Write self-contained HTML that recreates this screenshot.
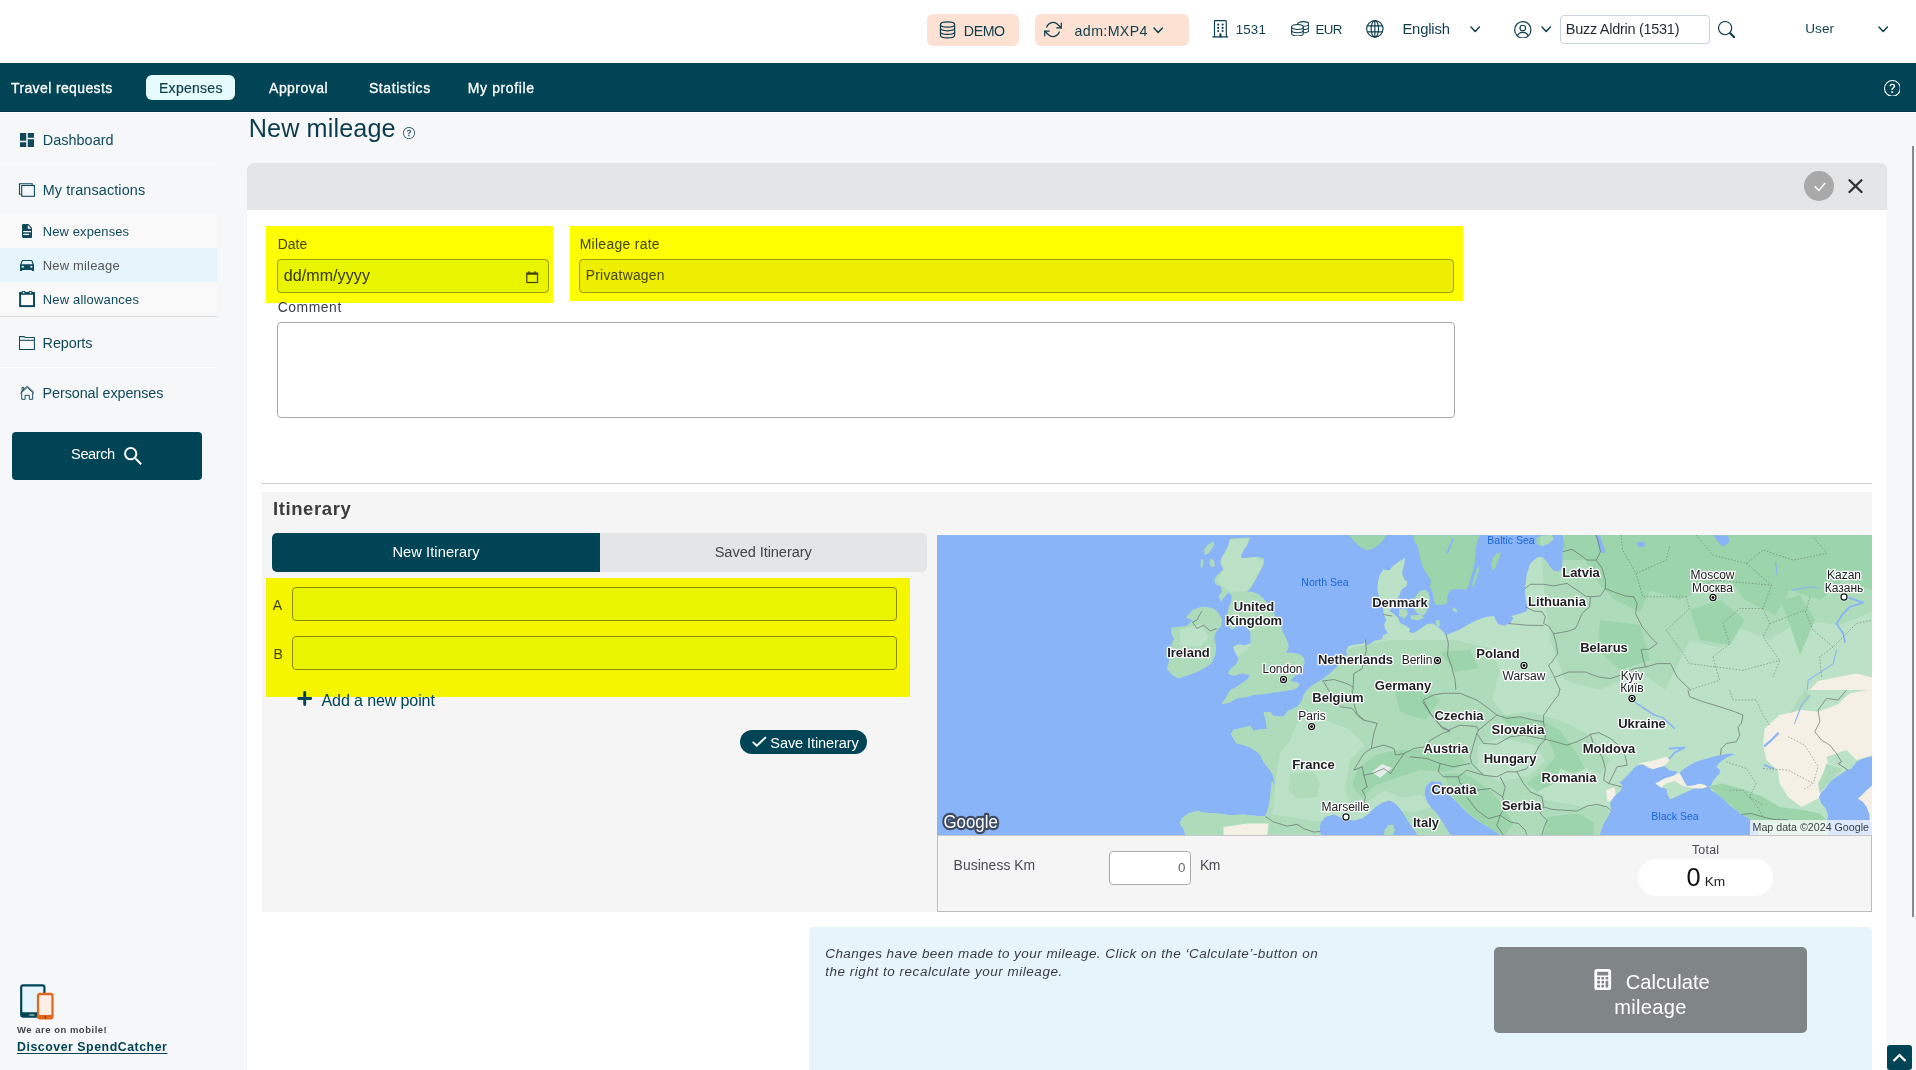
<!DOCTYPE html>
<html lang="en">
<head>
<meta charset="utf-8">
<title>New mileage</title>
<style>
*{box-sizing:border-box;margin:0;padding:0}
html,body{width:1916px;height:1070px;overflow:hidden}
body{position:relative;background:#f6f7f9;font-family:"Liberation Sans",sans-serif;color:#0b3c4c;font-size:15px}
.abs{position:absolute}
.t{position:absolute;white-space:nowrap;line-height:1}
svg{display:block;position:absolute}
#topbar{left:0;top:0;width:1916px;height:63px;background:#fff}
#navbar{left:0;top:63px;width:1916px;height:49px;background:#004455;border-bottom:1px solid #003748}
.pill{position:absolute;top:14px;height:32px;background:#fde1d3;border-radius:6px}
.tb{color:#0d3d4d;font-size:15px}
.nav{color:#fff;font-size:15px;top:80px;-webkit-text-stroke:0.25px #fff}
#sidebar{left:0;top:113px;width:217px;height:958px;background:#f6f7f9}
.sb{color:#0f4a5c;font-size:15.5px}
.sb2{color:#0f4a5c;font-size:13.5px}
.lbl{color:#3a4a50;font-size:15px}
.inp{position:absolute;border:1px solid #999;border-radius:4px;background:#fff}
.hl{position:absolute;background:#ffff00;mix-blend-mode:multiply}
</style>
</head>
<body>

<!-- ===== top bar ===== -->
<div id="topbar" class="abs"></div>
<div class="pill" style="left:927px;width:92px"></div>
<div class="pill" style="left:1035px;width:154px"></div>
<div class="abs" style="left:1560px;top:15px;width:150px;height:29px;border:1px solid #c9d3da;border-radius:4px;background:#fff"></div>

<!-- ===== nav bar ===== -->
<div id="navbar" class="abs"></div>
<div class="abs" style="left:0;top:112px;width:1916px;height:1px;background:#fff"></div>
<div class="abs" style="left:146px;top:75px;width:89px;height:25px;border-radius:6px;background:#e6fbfb"></div>

<!-- ===== sidebar ===== -->
<div id="sidebar" class="abs"></div>
<div class="abs" style="left:0;top:164px;width:217px;height:1px;background:#fff"></div>
<div class="abs" style="left:0;top:214px;width:217px;height:102px;background:#f9f9f9"></div>
<div class="abs" style="left:0;top:248px;width:217px;height:34px;background:#e6f5fb"></div>
<div class="abs" style="left:0;top:316px;width:217px;height:1px;background:#dcdcdc"></div>
<div class="abs" style="left:0;top:367px;width:217px;height:1px;background:#fff"></div>
<div class="abs" style="left:12px;top:432px;width:190px;height:48px;border-radius:4px;background:#004455"></div>

<!-- ===== main panel ===== -->
<div class="abs" style="left:247px;top:163px;width:1640px;height:907px;background:#fff;border-radius:7px 7px 0 0;box-shadow:0 0 2px rgba(0,0,0,0.05)"></div>
<div class="abs" style="left:247px;top:163px;width:1640px;height:47px;background:#e4e5e7;border-radius:7px 7px 0 0"></div>
<div class="abs" style="left:1804px;top:171px;width:30px;height:30px;border-radius:50%;background:#a9a9a9"></div>

<!-- form -->
<div class="inp" style="left:277px;top:259px;width:272px;height:34px;background:#e8f4fe"></div>
<div class="inp" style="left:579px;top:259px;width:875px;height:34px;background:#eeeeee"></div>
<div class="inp" style="left:277px;top:322px;width:1178px;height:96px;border-color:#aaa"></div>

<div class="abs" style="left:262px;top:483px;width:1610px;height:1px;background:#cfcfcf"></div>

<!-- itinerary -->
<div class="abs" style="left:262px;top:492px;width:1610px;height:420px;background:#f5f5f5"></div>
<div class="abs" style="left:272px;top:533px;width:328px;height:39px;background:#004455;border-radius:5px 0 0 5px"></div>
<div class="abs" style="left:600px;top:533px;width:327px;height:39px;background:#e4e5e7;border-radius:0 5px 5px 0"></div>
<div class="inp" style="left:292px;top:587px;width:605px;height:34px;background:#e8f4fe;border-color:#8a8a8a"></div>
<div class="inp" style="left:292px;top:636px;width:605px;height:34px;background:#e8f4fe;border-color:#8a8a8a"></div>
<div class="abs" style="left:740px;top:730px;width:127px;height:24px;border-radius:12px;background:#004455"></div>

<!-- map -->
<div id="map" class="abs" style="left:937px;top:535px;width:935px;height:300px;background:#8ab4f8;overflow:hidden">
<svg width="935" height="300" viewBox="0 0 935 300" style="left:0;top:0"><defs><clipPath id="landclip"><path d="M264.8 71.8 L255.6 74.8 L248.9 82.7 L255.6 85.2 L249.8 91.0 L241.4 91.9 L234.8 92.7 L233.9 98.5 L237.3 103.6 L233.9 110.2 L231.4 116.9 L232.2 125.3 L229.7 133.6 L234.8 139.5 L240.6 143.6 L249.8 141.1 L259.8 137.0 L268.2 132.8 L274.8 127.8 L278.2 120.3 L279.3 111.9 L277.3 103.6 L279.0 96.9 L284.0 91.0 L284.9 84.4 L281.5 77.7 L276.5 73.5 L270.7 72.2Z" fill="#000" /><path d="M313.3 2.5 L310.7 9.2 L306.6 15.0 L304.1 20.1 L304.1 23.4 L313.3 22.6 L321.6 22.1 L327.4 23.7 L326.6 29.2 L324.1 35.1 L319.9 41.8 L317.4 46.8 L314.1 52.6 L309.9 56.5 L315.8 57.1 L321.6 59.3 L326.6 63.5 L330.8 69.3 L335.0 75.2 L340.0 83.5 L344.1 91.0 L345.8 96.9 L349.2 103.6 L351.7 110.2 L350.8 114.4 L349.2 117.8 L356.7 117.8 L363.4 119.4 L367.0 122.8 L367.5 128.6 L365.0 134.5 L360.8 139.5 L355.8 142.8 L353.3 146.1 L360.0 147.3 L362.5 149.5 L360.0 152.8 L355.8 155.0 L353.3 155.3 L343.3 156.7 L335.0 157.8 L326.6 159.2 L316.6 160.0 L309.9 162.0 L299.9 163.4 L293.2 167.5 L284.5 169.2 L288.2 163.4 L293.2 155.0 L293.2 155.0 L298.2 152.8 L304.1 148.7 L309.9 144.5 L313.3 140.3 L304.9 138.6 L296.5 141.1 L290.7 138.6 L294.0 133.6 L299.9 128.6 L301.6 123.6 L298.2 117.8 L295.7 111.9 L301.6 109.4 L308.2 110.2 L313.3 108.6 L313.6 103.6 L313.3 96.9 L308.2 91.0 L299.9 89.4 L296.5 94.4 L293.2 93.5 L292.4 85.2 L290.7 78.5 L291.5 72.7 L294.0 66.8 L294.9 61.0 L291.5 57.6 L287.4 61.8 L284.0 66.8 L281.5 61.0 L284.9 56.8 L284.0 51.8 L278.2 49.3 L277.3 44.3 L281.5 38.4 L286.5 34.2 L283.2 28.4 L284.0 23.4 L288.2 16.7 L291.5 10.0 L293.2 3.7 L301.6 3.0Z" fill="#000" /><path d="M276.5 5.9 L277.3 10.0 L271.5 18.4 L267.3 20.1 L267.3 14.2 L271.5 9.2Z" fill="#000" /><path d="M273.2 23.4 L276.5 25.1 L278.2 30.9 L274.8 32.6 L272.3 28.4Z" fill="#000" /><path d="M264.0 24.2 L266.5 25.1 L265.7 32.6 L263.5 32.6Z" fill="#000" /><path d="M479.3 60.8 L482.3 56.3 L488.3 54.8 L491.5 57.8 L493.0 63.8 L491.5 69.8 L490.0 75.8 L486.8 80.6 L480.8 78.8 L476.3 72.8 L474.8 66.8Z" fill="#000" /><path d="M462.1 74.3 L468.8 73.5 L471.1 78.8 L467.3 83.5 L462.1 81.0Z" fill="#000" /><path d="M473.3 80.6 L483.8 79.7 L487.1 82.6 L480.8 85.6 L474.0 84.1Z" fill="#000" /><path d="M498.7 84.7 L502.5 85.5 L502.9 90.7 L499.5 91.5Z" fill="#000" /><path d="M515.9 72.0 L520.4 75.0 L518.9 77.6 L515.2 75.0Z" fill="#000" /><path d="M451.0 290.3 L456.0 289.4 L457.9 295.3 L455.5 300.6 L446.9 300.6 L447.7 295.3Z" fill="#000" /><path d="M412.0 0.2 L416.5 5.5 L422.4 11.5 L429.9 15.2 L437.4 12.9 L444.1 7.7 L447.9 2.5 L449.4 0.2Z" fill="#000" /><path d="M476.3 0.2 L477.8 7.0 L480.8 11.5 L482.3 18.9 L483.8 26.4 L486.8 33.9 L490.5 39.9 L494.2 45.9 L492.7 51.1 L495.7 57.8 L496.5 65.3 L498.7 69.8 L506.2 69.8 L510.7 68.3 L509.9 62.3 L513.7 54.8 L521.2 54.1 L529.4 54.8 L531.6 50.3 L533.1 44.4 L536.1 35.4 L537.6 27.9 L538.4 18.9 L539.1 11.5 L540.6 5.5 L542.8 0.2Z" fill="#000" /><path d="M541.3 30.9 L542.4 34.2 L537.2 50.6 L534.6 52.1 L537.6 39.9Z" fill="#000" /><path d="M563.8 17.4 L561.5 24.9 L558.5 32.4 L555.6 35.7 L554.1 29.4 L555.6 23.4 L559.3 18.2Z" fill="#000" /><path d="M599.1 3.4 L604.9 0.8 L615.0 0.0 L616.6 4.2 L611.6 8.4 L604.9 10.9 L599.9 9.2Z" fill="#000" /><path d="M935.0 0.0 L935.0 300.0 L821.8 300.3 L819.3 288.6 L814.3 284.9 L809.3 281.9 L804.3 279.4 L799.3 275.3 L792.6 270.2 L785.9 263.6 L779.3 258.5 L774.2 255.2 L772.6 252.2 L770.9 251.5 L765.9 253.5 L757.5 253.5 L749.2 256.9 L740.8 261.1 L733.3 264.4 L730.8 260.2 L729.1 253.5 L724.1 252.7 L718.3 248.5 L727.5 243.5 L737.5 240.2 L740.8 236.8 L732.5 235.2 L727.5 231.0 L720.8 232.7 L715.8 234.3 L710.8 232.7 L705.8 229.3 L699.1 231.0 L696.6 233.5 L692.4 238.5 L687.4 243.5 L682.4 247.7 L685.7 250.2 L684.1 255.2 L676.5 261.9 L673.2 268.6 L674.0 275.3 L670.7 281.9 L666.5 288.6 L662.3 300.3 L564.0 300.3 L556.5 295.3 L548.2 290.3 L539.8 285.3 L531.5 278.6 L524.8 271.9 L518.1 265.2 L511.4 258.5 L506.4 251.0 L503.9 246.5 L498.1 246.5 L494.4 246.0 L491.4 248.5 L488.4 252.2 L487.4 258.5 L489.7 266.9 L494.7 273.6 L499.7 278.6 L506.4 288.6 L513.4 300.3 L480.6 300.3 L475.3 292.0 L471.1 286.1 L467.7 280.3 L462.7 272.7 L456.9 267.2 L452.7 265.2 L446.9 266.9 L438.5 271.9 L431.8 278.6 L425.2 283.6 L416.8 285.6 L408.4 284.6 L396.8 279.6 L388.4 281.9 L383.7 286.9 L382.6 293.6 L383.7 300.3 L248.4 300.3 L246.4 293.6 L242.8 288.6 L244.8 283.6 L251.5 278.6 L259.8 276.1 L268.2 277.8 L279.8 278.6 L293.2 280.3 L306.6 279.4 L319.9 281.1 L328.3 281.6 L331.6 271.9 L333.3 261.9 L334.1 251.9 L335.0 246.0 L338.6 250.5 L335.3 238.5 L331.6 233.5 L326.6 226.8 L323.3 220.1 L319.9 216.8 L313.3 212.6 L306.6 210.1 L299.9 208.4 L296.5 203.4 L294.0 198.4 L296.5 195.1 L306.6 192.6 L313.3 190.9 L316.6 195.9 L323.3 194.2 L330.0 194.2 L329.1 186.7 L327.4 180.1 L326.6 176.7 L333.3 177.5 L336.6 180.9 L346.7 181.7 L350.8 175.9 L360.0 171.7 L365.0 165.9 L366.7 160.0 L370.0 155.0 L370.0 155.0 L376.7 149.5 L385.1 144.5 L391.7 139.5 L398.4 133.6 L405.1 126.9 L410.1 119.4 L409.3 115.3 L411.8 111.1 L418.5 109.4 L426.8 108.6 L428.5 104.4 L428.4 108.7 L430.7 110.5 L437.4 105.7 L444.9 104.2 L446.4 99.7 L450.9 98.2 L447.9 93.7 L447.1 89.2 L449.4 84.7 L447.1 80.3 L446.4 76.5 L445.6 69.8 L442.2 62.3 L440.4 54.8 L441.1 45.9 L442.6 39.9 L446.4 34.6 L452.4 35.4 L455.3 31.6 L462.1 26.4 L468.1 22.7 L467.3 28.7 L465.8 33.9 L465.1 38.4 L467.3 44.4 L470.3 46.6 L469.6 51.1 L464.3 54.8 L462.8 59.3 L459.8 65.3 L455.3 71.3 L452.4 75.8 L456.8 78.8 L461.3 83.2 L462.8 87.7 L468.8 90.7 L473.3 93.7 L471.8 96.7 L476.3 98.2 L482.3 94.5 L489.7 89.2 L495.7 88.5 L501.7 92.2 L506.2 96.7 L509.2 99.7 L513.7 98.2 L522.7 94.5 L531.6 89.2 L540.6 84.7 L549.6 81.7 L557.1 81.0 L558.5 84.7 L561.5 89.2 L567.5 90.7 L573.5 87.7 L576.5 83.2 L574.3 81.0 L582.5 78.8 L589.2 76.5 L590.7 72.8 L588.5 63.8 L587.7 54.8 L588.2 61.8 L588.2 50.1 L589.9 38.4 L593.3 28.4 L599.9 22.6 L604.9 21.7 L609.1 25.9 L612.5 30.9 L616.6 35.9 L621.6 36.8 L625.0 33.4 L625.8 25.1 L625.8 16.7 L627.5 10.0 L626.7 3.4 L625.8 0.0Z" fill="#000" /></clipPath></defs>
<path d="M264.8 71.8 L255.6 74.8 L248.9 82.7 L255.6 85.2 L249.8 91.0 L241.4 91.9 L234.8 92.7 L233.9 98.5 L237.3 103.6 L233.9 110.2 L231.4 116.9 L232.2 125.3 L229.7 133.6 L234.8 139.5 L240.6 143.6 L249.8 141.1 L259.8 137.0 L268.2 132.8 L274.8 127.8 L278.2 120.3 L279.3 111.9 L277.3 103.6 L279.0 96.9 L284.0 91.0 L284.9 84.4 L281.5 77.7 L276.5 73.5 L270.7 72.2Z" fill="#aedcba" />
<path d="M313.3 2.5 L310.7 9.2 L306.6 15.0 L304.1 20.1 L304.1 23.4 L313.3 22.6 L321.6 22.1 L327.4 23.7 L326.6 29.2 L324.1 35.1 L319.9 41.8 L317.4 46.8 L314.1 52.6 L309.9 56.5 L315.8 57.1 L321.6 59.3 L326.6 63.5 L330.8 69.3 L335.0 75.2 L340.0 83.5 L344.1 91.0 L345.8 96.9 L349.2 103.6 L351.7 110.2 L350.8 114.4 L349.2 117.8 L356.7 117.8 L363.4 119.4 L367.0 122.8 L367.5 128.6 L365.0 134.5 L360.8 139.5 L355.8 142.8 L353.3 146.1 L360.0 147.3 L362.5 149.5 L360.0 152.8 L355.8 155.0 L353.3 155.3 L343.3 156.7 L335.0 157.8 L326.6 159.2 L316.6 160.0 L309.9 162.0 L299.9 163.4 L293.2 167.5 L284.5 169.2 L288.2 163.4 L293.2 155.0 L293.2 155.0 L298.2 152.8 L304.1 148.7 L309.9 144.5 L313.3 140.3 L304.9 138.6 L296.5 141.1 L290.7 138.6 L294.0 133.6 L299.9 128.6 L301.6 123.6 L298.2 117.8 L295.7 111.9 L301.6 109.4 L308.2 110.2 L313.3 108.6 L313.6 103.6 L313.3 96.9 L308.2 91.0 L299.9 89.4 L296.5 94.4 L293.2 93.5 L292.4 85.2 L290.7 78.5 L291.5 72.7 L294.0 66.8 L294.9 61.0 L291.5 57.6 L287.4 61.8 L284.0 66.8 L281.5 61.0 L284.9 56.8 L284.0 51.8 L278.2 49.3 L277.3 44.3 L281.5 38.4 L286.5 34.2 L283.2 28.4 L284.0 23.4 L288.2 16.7 L291.5 10.0 L293.2 3.7 L301.6 3.0Z" fill="#aedcba" />
<path d="M276.5 5.9 L277.3 10.0 L271.5 18.4 L267.3 20.1 L267.3 14.2 L271.5 9.2Z" fill="#aedcba" />
<path d="M273.2 23.4 L276.5 25.1 L278.2 30.9 L274.8 32.6 L272.3 28.4Z" fill="#aedcba" />
<path d="M264.0 24.2 L266.5 25.1 L265.7 32.6 L263.5 32.6Z" fill="#aedcba" />
<path d="M479.3 60.8 L482.3 56.3 L488.3 54.8 L491.5 57.8 L493.0 63.8 L491.5 69.8 L490.0 75.8 L486.8 80.6 L480.8 78.8 L476.3 72.8 L474.8 66.8Z" fill="#aedcba" />
<path d="M462.1 74.3 L468.8 73.5 L471.1 78.8 L467.3 83.5 L462.1 81.0Z" fill="#aedcba" />
<path d="M473.3 80.6 L483.8 79.7 L487.1 82.6 L480.8 85.6 L474.0 84.1Z" fill="#aedcba" />
<path d="M498.7 84.7 L502.5 85.5 L502.9 90.7 L499.5 91.5Z" fill="#aedcba" />
<path d="M515.9 72.0 L520.4 75.0 L518.9 77.6 L515.2 75.0Z" fill="#aedcba" />
<path d="M451.0 290.3 L456.0 289.4 L457.9 295.3 L455.5 300.6 L446.9 300.6 L447.7 295.3Z" fill="#aedcba" />
<path d="M412.0 0.2 L416.5 5.5 L422.4 11.5 L429.9 15.2 L437.4 12.9 L444.1 7.7 L447.9 2.5 L449.4 0.2Z" fill="#9cd5ab" />
<path d="M476.3 0.2 L477.8 7.0 L480.8 11.5 L482.3 18.9 L483.8 26.4 L486.8 33.9 L490.5 39.9 L494.2 45.9 L492.7 51.1 L495.7 57.8 L496.5 65.3 L498.7 69.8 L506.2 69.8 L510.7 68.3 L509.9 62.3 L513.7 54.8 L521.2 54.1 L529.4 54.8 L531.6 50.3 L533.1 44.4 L536.1 35.4 L537.6 27.9 L538.4 18.9 L539.1 11.5 L540.6 5.5 L542.8 0.2Z" fill="#9cd5ab" />
<path d="M541.3 30.9 L542.4 34.2 L537.2 50.6 L534.6 52.1 L537.6 39.9Z" fill="#9cd5ab" />
<path d="M563.8 17.4 L561.5 24.9 L558.5 32.4 L555.6 35.7 L554.1 29.4 L555.6 23.4 L559.3 18.2Z" fill="#9cd5ab" />
<path d="M599.1 3.4 L604.9 0.8 L615.0 0.0 L616.6 4.2 L611.6 8.4 L604.9 10.9 L599.9 9.2Z" fill="#9cd5ab" />
<path d="M935.0 0.0 L935.0 300.0 L821.8 300.3 L819.3 288.6 L814.3 284.9 L809.3 281.9 L804.3 279.4 L799.3 275.3 L792.6 270.2 L785.9 263.6 L779.3 258.5 L774.2 255.2 L772.6 252.2 L770.9 251.5 L765.9 253.5 L757.5 253.5 L749.2 256.9 L740.8 261.1 L733.3 264.4 L730.8 260.2 L729.1 253.5 L724.1 252.7 L718.3 248.5 L727.5 243.5 L737.5 240.2 L740.8 236.8 L732.5 235.2 L727.5 231.0 L720.8 232.7 L715.8 234.3 L710.8 232.7 L705.8 229.3 L699.1 231.0 L696.6 233.5 L692.4 238.5 L687.4 243.5 L682.4 247.7 L685.7 250.2 L684.1 255.2 L676.5 261.9 L673.2 268.6 L674.0 275.3 L670.7 281.9 L666.5 288.6 L662.3 300.3 L564.0 300.3 L556.5 295.3 L548.2 290.3 L539.8 285.3 L531.5 278.6 L524.8 271.9 L518.1 265.2 L511.4 258.5 L506.4 251.0 L503.9 246.5 L498.1 246.5 L494.4 246.0 L491.4 248.5 L488.4 252.2 L487.4 258.5 L489.7 266.9 L494.7 273.6 L499.7 278.6 L506.4 288.6 L513.4 300.3 L480.6 300.3 L475.3 292.0 L471.1 286.1 L467.7 280.3 L462.7 272.7 L456.9 267.2 L452.7 265.2 L446.9 266.9 L438.5 271.9 L431.8 278.6 L425.2 283.6 L416.8 285.6 L408.4 284.6 L396.8 279.6 L388.4 281.9 L383.7 286.9 L382.6 293.6 L383.7 300.3 L248.4 300.3 L246.4 293.6 L242.8 288.6 L244.8 283.6 L251.5 278.6 L259.8 276.1 L268.2 277.8 L279.8 278.6 L293.2 280.3 L306.6 279.4 L319.9 281.1 L328.3 281.6 L331.6 271.9 L333.3 261.9 L334.1 251.9 L335.0 246.0 L338.6 250.5 L335.3 238.5 L331.6 233.5 L326.6 226.8 L323.3 220.1 L319.9 216.8 L313.3 212.6 L306.6 210.1 L299.9 208.4 L296.5 203.4 L294.0 198.4 L296.5 195.1 L306.6 192.6 L313.3 190.9 L316.6 195.9 L323.3 194.2 L330.0 194.2 L329.1 186.7 L327.4 180.1 L326.6 176.7 L333.3 177.5 L336.6 180.9 L346.7 181.7 L350.8 175.9 L360.0 171.7 L365.0 165.9 L366.7 160.0 L370.0 155.0 L370.0 155.0 L376.7 149.5 L385.1 144.5 L391.7 139.5 L398.4 133.6 L405.1 126.9 L410.1 119.4 L409.3 115.3 L411.8 111.1 L418.5 109.4 L426.8 108.6 L428.5 104.4 L428.4 108.7 L430.7 110.5 L437.4 105.7 L444.9 104.2 L446.4 99.7 L450.9 98.2 L447.9 93.7 L447.1 89.2 L449.4 84.7 L447.1 80.3 L446.4 76.5 L445.6 69.8 L442.2 62.3 L440.4 54.8 L441.1 45.9 L442.6 39.9 L446.4 34.6 L452.4 35.4 L455.3 31.6 L462.1 26.4 L468.1 22.7 L467.3 28.7 L465.8 33.9 L465.1 38.4 L467.3 44.4 L470.3 46.6 L469.6 51.1 L464.3 54.8 L462.8 59.3 L459.8 65.3 L455.3 71.3 L452.4 75.8 L456.8 78.8 L461.3 83.2 L462.8 87.7 L468.8 90.7 L473.3 93.7 L471.8 96.7 L476.3 98.2 L482.3 94.5 L489.7 89.2 L495.7 88.5 L501.7 92.2 L506.2 96.7 L509.2 99.7 L513.7 98.2 L522.7 94.5 L531.6 89.2 L540.6 84.7 L549.6 81.7 L557.1 81.0 L558.5 84.7 L561.5 89.2 L567.5 90.7 L573.5 87.7 L576.5 83.2 L574.3 81.0 L582.5 78.8 L589.2 76.5 L590.7 72.8 L588.5 63.8 L587.7 54.8 L588.2 61.8 L588.2 50.1 L589.9 38.4 L593.3 28.4 L599.9 22.6 L604.9 21.7 L609.1 25.9 L612.5 30.9 L616.6 35.9 L621.6 36.8 L625.0 33.4 L625.8 25.1 L625.8 16.7 L627.5 10.0 L626.7 3.4 L625.8 0.0Z" fill="#bbe2c6" />
<g clip-path="url(#landclip)">
<path d="M291.5 5.0 L309.9 4.2 L319.9 23.4 L326.6 26.7 L318.3 45.1 L309.9 56.0 L293.2 57.1 L284.9 50.9 L279.8 45.1 L286.5 35.1 L284.0 25.1Z" fill="#bbe2c6" />
<path d="M299.9 95.2 L309.9 93.5 L313.3 111.9 L299.9 121.9 L296.5 111.9Z" fill="#bbe2c6" />
<path d="M243.1 95.2 L263.1 88.5 L271.5 101.9 L263.1 111.9 L243.1 110.2Z" fill="#bbe2c6" />
<path d="M291.5 190.9 L331.6 174.2 L353.3 171.7 L361.7 165.0 L373.4 155.0 L393.4 155.0 L385.1 175.0 L360.0 188.4 L353.3 205.1 L343.3 218.5 L340.0 233.5 L338.3 248.5 L336.6 271.9 L333.3 283.6 L324.9 283.6 L330.0 248.5 L319.9 218.5 L296.5 210.9Z" fill="#aedcba" />
<path d="M353.3 238.5 L376.7 236.8 L383.4 248.5 L380.1 261.9 L360.0 263.6 L351.7 255.2Z" fill="#aedcba" />
<path d="M353.0 170.0 L368.0 145.0 L393.0 120.0 L413.0 113.0 L453.0 105.0 L483.0 105.0 L518.0 105.0 L553.0 113.0 L563.0 135.0 L555.0 165.0 L568.0 180.0 L593.0 177.0 L623.0 185.0 L653.0 200.0 L673.0 225.0 L663.0 240.0 L633.0 225.0 L608.0 235.0 L593.0 255.0 L623.0 265.0 L653.0 265.0 L673.0 275.0 L663.0 305.0 L463.0 305.0 L468.0 265.0 L448.0 255.0 L433.0 265.0 L418.0 280.0 L408.0 255.0 L413.0 225.0 L428.0 210.0 L413.0 195.0 L393.0 187.0 L373.0 180.0Z" fill="#aedcba" />
<path d="M241.4 275.3 L330.0 278.6 L383.4 286.9 L385.1 302.0 L241.4 302.0Z" fill="#aedcba" />
<path d="M541.0 210.0 L563.0 203.0 L598.0 210.0 L608.0 225.0 L593.0 240.0 L563.0 247.0 L541.0 235.0Z" fill="#bbe2c6" />
<path d="M448.0 265.0 L483.0 260.0 L503.0 270.0 L478.0 277.0 L453.0 275.0Z" fill="#bbe2c6" />
<path d="M603.0 250.0 L663.0 243.0 L675.0 265.0 L653.0 273.0 L608.0 265.0Z" fill="#bbe2c6" />
<path d="M603.0 0.0 L935.0 0.0 L935.0 77.0 L903.0 90.0 L863.0 85.0 L833.0 105.0 L803.0 93.0 L783.0 113.0 L753.0 105.0 L728.0 155.0 L703.0 137.0 L663.0 155.0 L628.0 145.0 L613.0 105.0 L608.0 65.0Z" fill="#aedcba" />
<path d="M623.0 0.0 L935.0 0.0 L935.0 55.0 L908.0 45.0 L883.0 65.0 L853.0 55.0 L838.0 80.0 L808.0 65.0 L793.0 45.0 L763.0 50.0 L743.0 65.0 L713.0 55.0 L703.0 77.0 L678.0 65.0 L663.0 50.0 L648.0 25.0 L625.0 25.0Z" fill="#9cd5ab" />
<path d="M663.0 85.0 L703.0 90.0 L713.0 125.0 L683.0 135.0 L661.0 115.0Z" fill="#9cd5ab" />
<path d="M753.0 75.0 L783.0 65.0 L808.0 85.0 L793.0 110.0 L763.0 105.0Z" fill="#9cd5ab" />
<path d="M843.0 65.0 L863.0 60.0 L878.0 85.0 L863.0 120.0 L853.0 90.0Z" fill="#9cd5ab" />
<path d="M458.0 155.0 L483.0 150.0 L503.0 165.0 L488.0 185.0 L463.0 177.0Z" fill="#9cd5ab" />
<path d="M503.0 117.0 L533.0 115.0 L541.0 133.0 L518.0 137.0Z" fill="#9cd5ab" />
<path d="M421.0 233.0 L441.0 219.0 L463.0 215.0 L499.0 215.0 L523.0 219.0 L529.0 229.0 L509.0 237.0 L483.0 235.0 L459.0 243.0 L437.0 251.0 L425.0 263.0 L415.0 251.0Z" fill="#9cd5ab" />
<path d="M435.0 237.0 L445.0 229.0 L455.0 233.0 L443.0 243.0Z" fill="#e3ece6" />
<path d="M563.2 180.1 L583.2 181.7 L606.6 186.7 L623.3 195.1 L633.3 208.4 L641.7 221.8 L648.4 233.5 L636.7 238.5 L623.3 233.5 L616.6 248.5 L599.9 256.9 L589.9 248.5 L606.6 235.2 L618.3 221.8 L611.6 205.1 L596.6 195.1 L573.2 191.7Z" fill="#9cd5ab" />
<path d="M506.4 238.5 L528.1 238.5 L553.2 255.2 L566.5 271.9 L576.5 288.6 L566.5 302.0 L553.2 293.6 L539.8 285.3 L518.1 265.2Z" fill="#9cd5ab" />
<path d="M610.0 281.9 L640.0 278.6 L656.7 286.9 L656.7 302.0 L606.6 302.0Z" fill="#9cd5ab" />
<path d="M566.5 248.5 L589.9 248.5 L599.9 263.6 L589.9 278.6 L569.9 275.3 L566.5 261.9Z" fill="#aedcba" />
<path d="M771.7 251.0 L785.9 248.5 L809.3 255.2 L826.0 261.9 L842.7 271.9 L867.8 275.3 L882.8 278.6 L891.2 286.9 L876.1 288.6 L819.3 288.6 L809.3 282.3 L799.3 275.6 L785.9 263.9Z" fill="#9cd5ab" />
<path d="M936.2 154.2 L912.9 158.3 L899.5 170.0 L881.1 176.7 L864.4 175.0 L842.7 180.1 L827.7 193.4 L826.0 210.1 L829.4 225.1 L841.0 235.2 L842.7 248.5 L851.1 261.9 L864.4 271.9 L881.1 263.6 L889.5 250.2 L899.5 240.2 L906.2 233.5 L891.2 228.5 L889.5 221.8 L909.5 215.1 L919.5 225.1 L936.2 220.1Z" fill="#f5f0e5" />
<path d="M872.8 155.0 L881.1 146.1 L901.2 142.0 L919.5 138.6 L936.2 142.8 L936.2 155.0Z" fill="#f5f0e5" />
<path d="M889.5 228.5 L906.2 233.5 L899.5 240.2 L889.5 250.2 L882.8 258.5 L881.1 248.5 L886.1 238.5Z" fill="#aedcba" />
<path d="M852.7 178.4 L866.1 171.7 L874.4 161.7 L867.8 154.2 L861.1 165.0Z" fill="#aedcba" />
<path d="M718.3 248.5 L727.5 243.5 L737.5 240.2 L742.5 237.7 L750.0 251.0 L762.5 248.5 L771.2 251.5 L765.9 253.5 L757.5 253.5 L745.8 251.0 L737.5 246.0 L729.1 248.5 L724.1 252.7Z" fill="#f5f0e5" />
<path d="M700.8 228.5 L714.1 226.0 L729.1 221.8 L732.5 225.1 L727.5 231.0 L715.8 234.3 L705.8 229.3Z" fill="#f5f0e5" />
<path d="M669.0 255.2 L677.4 251.9 L679.0 261.9 L670.7 266.9Z" fill="#f5f0e5" />
<path d="M286.5 292.0 L309.9 288.6 L331.6 288.6 L330.0 302.0 L286.5 302.0Z" fill="#f5f0e5" />
</g>
<path d="M515.5 3.2 L517.0 4.3 L511.0 18.2 L508.9 18.2 L512.9 9.2Z" fill="#8ab4f8" />
<path d="M742.5 237.7 L747.5 233.5 L752.5 230.2 L759.2 226.8 L767.6 224.3 L775.9 221.8 L784.3 220.1 L792.6 218.5 L798.0 219.3 L790.9 221.8 L785.9 225.1 L781.8 228.5 L779.3 231.8 L783.4 235.2 L782.6 238.5 L779.3 241.8 L775.9 246.0 L774.2 250.2 L771.2 251.9 L767.6 249.4 L762.5 248.5 L757.5 250.2 L750.0 251.0 L747.5 246.9 L745.0 241.8Z" fill="#8ab4f8" />
<path d="M936.2 221.0 L926.2 223.5 L919.5 226.8 L914.5 233.5 L909.5 235.2 L904.5 238.5 L899.5 241.8 L892.8 246.9 L889.5 251.9 L884.5 256.9 L882.0 261.9 L884.5 268.6 L888.6 273.6 L891.2 280.3 L889.5 286.9 L892.0 302.0 L936.2 302.0Z" fill="#8ab4f8" />
<path d="M936.2 249.4 L929.6 255.2 L924.6 260.2 L920.9 263.6 L926.2 267.2 L929.6 271.9 L932.1 278.6 L933.2 286.9 L936.2 286.9Z" fill="#f5f0e5" />
<path d="M775.9 0.0 L790.9 0.8 L792.6 6.7 L785.9 11.7 L780.9 6.7Z" fill="#8ab4f8" />
<path d="M699.1 7.5 L707.4 6.7 L708.3 10.9 L701.6 12.5Z" fill="#8ab4f8" />
<path d="M659.0 0.0 L663.2 0.8 L667.4 15.0 L664.0 17.5 L660.7 8.4Z" fill="#8ab4f8" />
<path d="M662.6 11.7 L667.6 12.5 L667.6 18.4 L663.4 17.5Z" fill="#8ab4f8" />
<path d="M909.5 61.8 L926.2 67.7 L912.9 71.8 L906.2 78.5 L899.5 88.5 L906.2 98.5 L907.9 106.9" fill="none" stroke="#8ab4f8" stroke-width="1.8" stroke-linejoin="round" stroke-linecap="round"/>
<path d="M899.5 115.3 L896.2 128.6 L881.1 138.6 L871.1 145.3 L870.3 155.0" fill="none" stroke="#8ab4f8" stroke-width="1.1" stroke-linejoin="round" stroke-linecap="round"/>
<path d="M854.4 55.1 L874.4 51.8 L882.8 53.5" fill="none" stroke="#8ab4f8" stroke-width="1.1" stroke-linejoin="round" stroke-linecap="round"/>
<path d="M838.5 26.7 L840.2 40.1" fill="none" stroke="#8ab4f8" stroke-width="1.1" stroke-linejoin="round" stroke-linecap="round"/>
<path d="M694.9 165.0 L705.8 172.5 L717.5 180.1 L725.8 182.6 L737.5 193.4" fill="none" stroke="#8ab4f8" stroke-width="1.5" stroke-linejoin="round" stroke-linecap="round"/>
<path d="M732.5 213.5 L747.5 212.6 L737.5 217.6 L732.5 223.5" fill="none" stroke="#8ab4f8" stroke-width="1.8" stroke-linejoin="round" stroke-linecap="round"/>
<path d="M872.8 160.0 L864.4 170.0 L857.7 188.4" fill="none" stroke="#8ab4f8" stroke-width="1.1" stroke-linejoin="round" stroke-linecap="round"/>
<path d="M841.0 198.4 L834.4 205.1 L827.7 210.9" fill="none" stroke="#8ab4f8" stroke-width="2.2" stroke-linejoin="round" stroke-linecap="round"/>
<path d="M827.7 230.2 L836.0 233.5" fill="none" stroke="#8ab4f8" stroke-width="1.8" stroke-linejoin="round" stroke-linecap="round"/>
<path d="M625.8 16.7 L635.0 14.2 L643.4 20.1 L650.0 25.1 L659.2 25.1 L663.4 16.7 L660.9 5.0 L658.4 0.0" fill="none" stroke="#5f6368" stroke-width="0.75" stroke-opacity="0.85" stroke-linejoin="round"/>
<path d="M659.2 25.1 L665.1 33.4 L668.4 45.1 L668.4 53.5" fill="none" stroke="#5f6368" stroke-width="0.75" stroke-opacity="0.85" stroke-linejoin="round"/>
<path d="M588.2 53.5 L593.3 49.3 L606.6 49.3 L616.6 50.9 L630.0 48.4 L640.0 55.1 L648.4 61.0 L653.4 61.8 L663.4 61.0 L668.4 53.5" fill="none" stroke="#5f6368" stroke-width="0.75" stroke-opacity="0.85" stroke-linejoin="round"/>
<path d="M653.4 61.8 L652.5 71.8 L645.0 78.5 L640.8 88.5 L638.3 93.5 L631.7 96.0 L623.3 97.7 L616.6 98.5" fill="none" stroke="#5f6368" stroke-width="0.75" stroke-opacity="0.85" stroke-linejoin="round"/>
<path d="M588.2 71.8 L596.6 76.0 L604.9 76.8 L608.3 81.8 L606.6 88.5 L611.6 91.0 L616.6 98.5" fill="none" stroke="#5f6368" stroke-width="0.75" stroke-opacity="0.85" stroke-linejoin="round"/>
<path d="M571.5 88.5 L589.9 90.2 L606.6 90.5" fill="none" stroke="#5f6368" stroke-width="0.75" stroke-opacity="0.85" stroke-linejoin="round"/>
<path d="M616.6 98.5 L619.1 108.6 L620.8 118.6 L615.0 126.9 L611.6 130.3 L616.6 140.3 L620.0 148.7 L623.3 155.0" fill="none" stroke="#5f6368" stroke-width="0.75" stroke-opacity="0.85" stroke-linejoin="round"/>
<path d="M668.4 53.5 L678.4 57.6 L688.4 61.0 L696.8 61.8 L700.1 68.5 L698.5 78.5 L705.2 91.9 L713.5 101.9 L720.2 108.6 L711.8 114.4 L704.3 114.4 L706.0 123.6 L708.5 132.0" fill="none" stroke="#5f6368" stroke-width="0.75" stroke-opacity="0.85" stroke-linejoin="round"/>
<path d="M618.3 142.0 L631.7 137.0 L648.4 137.0 L661.7 142.0 L673.4 143.6 L683.4 140.3 L696.8 133.6 L708.5 132.0" fill="none" stroke="#5f6368" stroke-width="0.75" stroke-opacity="0.85" stroke-linejoin="round"/>
<path d="M708.5 132.0 L720.2 128.6 L733.5 128.6 L740.2 142.0 L746.9 148.7 L753.6 155.0" fill="none" stroke="#5f6368" stroke-width="0.75" stroke-opacity="0.85" stroke-linejoin="round"/>
<path d="M508.9 98.5 L511.4 108.6 L510.6 120.3 L514.8 132.0 L518.1 145.3 L518.9 155.0" fill="none" stroke="#5f6368" stroke-width="0.75" stroke-opacity="0.85" stroke-linejoin="round"/>
<path d="M750.9 155.0 L752.5 161.7 L765.9 166.7 L782.6 171.7 L797.6 176.7 L806.0 180.1 L804.3 188.4 L801.0 191.7 L802.6 200.1 L799.3 206.8 L789.3 208.4 L784.3 213.5 L783.4 220.1" fill="none" stroke="#5f6368" stroke-width="0.75" stroke-opacity="0.85" stroke-linejoin="round"/>
<path d="M909.5 155.0 L901.2 165.0 L889.5 163.4 L881.1 175.0 L882.8 186.7 L877.8 196.8 L884.5 205.1 L892.8 210.1 L899.5 218.5 L904.5 226.8 L901.2 228.5 L911.2 235.2" fill="none" stroke="#5f6368" stroke-width="0.75" stroke-opacity="0.85" stroke-linejoin="round"/>
<path d="M804.3 279.4 L814.3 278.6 L826.0 281.9 L836.0 284.4 L851.1 284.9" fill="none" stroke="#5f6368" stroke-width="0.75" stroke-opacity="0.85" stroke-linejoin="round"/>
<path d="M486.4 165.0 L493.0 178.4 L504.7 191.7 L511.4 195.1" fill="none" stroke="#5f6368" stroke-width="0.75" stroke-opacity="0.85" stroke-linejoin="round"/>
<path d="M486.4 165.0 L496.4 160.0 L506.4 158.3 L523.1 158.3 L539.8 165.0 L551.5 173.4 L559.8 180.1" fill="none" stroke="#5f6368" stroke-width="0.75" stroke-opacity="0.85" stroke-linejoin="round"/>
<path d="M511.4 195.1 L523.1 190.1 L539.8 191.7 L541.5 195.1 L549.8 188.4 L559.8 180.1" fill="none" stroke="#5f6368" stroke-width="0.75" stroke-opacity="0.85" stroke-linejoin="round"/>
<path d="M559.8 180.1 L569.9 183.4 L583.2 181.7 L596.6 185.1 L606.6 186.7 L606.6 180.1 L615.0 168.4 L621.6 160.0 L622.5 155.0" fill="none" stroke="#5f6368" stroke-width="0.75" stroke-opacity="0.85" stroke-linejoin="round"/>
<path d="M541.5 195.1 L539.8 198.4 L546.5 208.4 L559.8 209.3 L573.2 201.8 L586.6 200.1 L603.3 203.4 L608.3 204.3 L606.6 186.7" fill="none" stroke="#5f6368" stroke-width="0.75" stroke-opacity="0.85" stroke-linejoin="round"/>
<path d="M539.8 198.4 L536.5 210.1 L533.1 221.8 L534.8 228.5 L546.5 240.2 L559.8 241.8 L569.9 236.8 L579.9 236.8 L589.9 233.5 L596.6 221.8 L601.6 211.8 L608.3 204.3" fill="none" stroke="#5f6368" stroke-width="0.75" stroke-opacity="0.85" stroke-linejoin="round"/>
<path d="M608.3 204.3 L618.3 206.8 L630.0 210.1 L640.0 206.8 L650.0 201.8 L653.4 199.3 L661.7 197.6 L673.4 203.4 L683.4 211.8 L688.4 221.8 L690.1 230.2 L680.1 231.8 L676.8 238.5 L671.7 248.5 L678.4 250.2 L685.1 251.9" fill="none" stroke="#5f6368" stroke-width="0.75" stroke-opacity="0.85" stroke-linejoin="round"/>
<path d="M653.4 199.3 L656.7 210.1 L665.1 221.8 L668.4 233.5 L666.7 245.2 L671.7 248.5" fill="none" stroke="#5f6368" stroke-width="0.75" stroke-opacity="0.85" stroke-linejoin="round"/>
<path d="M606.6 271.9 L615.0 274.4 L640.0 276.1 L650.0 271.1 L660.1 269.4 L670.1 271.9 L673.4 275.3" fill="none" stroke="#5f6368" stroke-width="0.75" stroke-opacity="0.85" stroke-linejoin="round"/>
<path d="M579.9 236.8 L586.6 248.5 L593.3 256.9 L604.9 261.9 L606.6 271.9 L603.3 278.6 L610.0 285.3 L606.6 293.6 L604.9 300.3" fill="none" stroke="#5f6368" stroke-width="0.75" stroke-opacity="0.85" stroke-linejoin="round"/>
<path d="M563.2 241.8 L568.2 251.9 L565.7 261.9 L568.2 271.9 L563.2 280.3 L573.2 286.9 L581.6 288.6 L588.2 295.3 L589.9 300.3" fill="none" stroke="#5f6368" stroke-width="0.75" stroke-opacity="0.85" stroke-linejoin="round"/>
<path d="M473.0 221.8 L489.7 223.5 L503.1 228.5 L516.4 231.8 L533.1 228.5" fill="none" stroke="#5f6368" stroke-width="0.75" stroke-opacity="0.85" stroke-linejoin="round"/>
<path d="M503.1 228.5 L501.4 236.8 L506.4 241.8 L521.4 241.8 L529.8 235.2 L546.5 240.2" fill="none" stroke="#5f6368" stroke-width="0.75" stroke-opacity="0.85" stroke-linejoin="round"/>
<path d="M521.4 241.8 L523.1 248.5 L539.8 255.2 L553.2 253.5 L565.7 261.9" fill="none" stroke="#5f6368" stroke-width="0.75" stroke-opacity="0.85" stroke-linejoin="round"/>
<path d="M529.8 261.9 L539.8 275.3 L551.5 283.6 L563.2 280.3" fill="none" stroke="#5f6368" stroke-width="0.75" stroke-opacity="0.85" stroke-linejoin="round"/>
<path d="M563.2 280.3 L559.8 290.3 L566.5 300.3" fill="none" stroke="#5f6368" stroke-width="0.75" stroke-opacity="0.85" stroke-linejoin="round"/>
<path d="M386.7 146.6 L393.4 158.3 L403.4 171.7 L415.1 173.4 L421.8 181.7 L426.8 185.1 L440.2 188.4 L436.8 198.4 L434.3 213.5" fill="none" stroke="#5f6368" stroke-width="0.75" stroke-opacity="0.85" stroke-linejoin="round"/>
<path d="M434.3 213.5 L446.9 210.1 L456.9 213.5 L458.6 220.1 L466.9 218.5 L476.9 213.5 L488.6 211.8 L493.6 205.1 L505.3 198.4 L513.0 195.9" fill="none" stroke="#5f6368" stroke-width="0.75" stroke-opacity="0.85" stroke-linejoin="round"/>
<path d="M434.3 213.5 L426.8 218.5 L416.8 235.2 L425.2 231.8 L426.8 240.2 L430.2 251.9 L425.2 255.2 L428.5 261.9 L426.8 268.6 L433.5 271.9" fill="none" stroke="#5f6368" stroke-width="0.75" stroke-opacity="0.85" stroke-linejoin="round"/>
<path d="M426.8 240.2 L435.2 238.5 L446.9 233.5 L453.5 238.5 L460.2 228.5 L466.9 218.5" fill="none" stroke="#5f6368" stroke-width="0.75" stroke-opacity="0.85" stroke-linejoin="round"/>
<path d="M328.3 281.6 L336.6 286.9 L350.0 291.1 L360.0 289.4 L366.7 293.6 L376.7 297.0 L383.4 296.6" fill="none" stroke="#5f6368" stroke-width="0.75" stroke-opacity="0.85" stroke-linejoin="round"/>
<path d="M415.1 155.0 L416.8 168.4 L420.1 178.4 L426.8 185.1" fill="none" stroke="#5f6368" stroke-width="0.75" stroke-opacity="0.85" stroke-linejoin="round"/>
<path d="M485.3 166.7 L493.6 178.4 L505.3 193.4 L513.0 195.9" fill="none" stroke="#5f6368" stroke-width="0.75" stroke-opacity="0.85" stroke-linejoin="round"/>
<path d="M428.5 104.4 L429.3 115.3 L425.2 133.6 L416.8 138.6 L416.0 155.0" fill="none" stroke="#5f6368" stroke-width="0.75" stroke-opacity="0.85" stroke-linejoin="round"/>
<path d="M385.1 146.1 L396.8 144.5 L410.1 148.7 L416.0 152.0" fill="none" stroke="#5f6368" stroke-width="0.75" stroke-opacity="0.85" stroke-linejoin="round"/>
<path d="M264.8 76.0 L259.8 85.2 L255.6 86.9 L259.8 93.5 L266.5 90.2 L273.2 96.0 L279.8 93.5" fill="none" stroke="#5f6368" stroke-width="0.75" stroke-opacity="0.85" stroke-linejoin="round"/>
<path d="M446.4 79.5 L455.3 81.0" fill="none" stroke="#5f6368" stroke-width="0.75" stroke-opacity="0.85" stroke-linejoin="round"/>
<path d="M684.1 0.0 L685.7 15.0 L699.1 38.4 L705.8 61.8 L749.2 61.8 L752.5 73.5 L729.1 95.2 L739.2 108.6" fill="none" stroke="#5f6368" stroke-width="0.7" stroke-opacity="0.7" stroke-dasharray="1.6 1.6"/>
<path d="M732.5 11.7 L729.1 25.1 L699.1 38.4" fill="none" stroke="#5f6368" stroke-width="0.7" stroke-opacity="0.7" stroke-dasharray="1.6 1.6"/>
<path d="M749.2 61.8 L775.9 45.1 L834.4 50.1 L826.0 73.5 L802.6 73.5 L785.9 88.5 L792.6 108.6 L775.9 121.9" fill="none" stroke="#5f6368" stroke-width="0.7" stroke-opacity="0.7" stroke-dasharray="1.6 1.6"/>
<path d="M759.2 0.0 L775.9 20.1 L809.3 28.4 L834.4 50.1" fill="none" stroke="#5f6368" stroke-width="0.7" stroke-opacity="0.7" stroke-dasharray="1.6 1.6"/>
<path d="M809.3 28.4 L826.0 15.0 L856.1 25.1 L889.5 18.4 L876.1 1.7" fill="none" stroke="#5f6368" stroke-width="0.7" stroke-opacity="0.7" stroke-dasharray="1.6 1.6"/>
<path d="M826.0 73.5 L832.7 88.5 L826.0 101.9 L842.7 125.3 L836.0 142.0" fill="none" stroke="#5f6368" stroke-width="0.7" stroke-opacity="0.7" stroke-dasharray="1.6 1.6"/>
<path d="M832.7 88.5 L867.8 75.2 L876.1 95.2 L896.2 111.9 L919.5 88.5 L934.6 85.2" fill="none" stroke="#5f6368" stroke-width="0.7" stroke-opacity="0.7" stroke-dasharray="1.6 1.6"/>
<path d="M872.8 61.8 L869.4 75.2" fill="none" stroke="#5f6368" stroke-width="0.7" stroke-opacity="0.7" stroke-dasharray="1.6 1.6"/>
<path d="M896.2 111.9 L882.8 121.9 L884.5 142.0" fill="none" stroke="#5f6368" stroke-width="0.7" stroke-opacity="0.7" stroke-dasharray="1.6 1.6"/>
<path d="M739.2 108.6 L752.5 128.6 L806.0 135.3 L842.7 125.3" fill="none" stroke="#5f6368" stroke-width="0.7" stroke-opacity="0.7" stroke-dasharray="1.6 1.6"/>
<path d="M775.9 121.9 L782.6 145.3 L752.5 155.0" fill="none" stroke="#5f6368" stroke-width="0.7" stroke-opacity="0.7" stroke-dasharray="1.6 1.6"/>
<path d="M792.6 155.0 L796.0 165.0 L819.3 165.0 L826.0 180.1 L832.7 190.1" fill="none" stroke="#5f6368" stroke-width="0.7" stroke-opacity="0.7" stroke-dasharray="1.6 1.6"/>
<path d="M851.1 201.8 L867.8 210.1 L881.1 231.8 L876.1 248.5 L866.1 255.2" fill="none" stroke="#5f6368" stroke-width="0.7" stroke-opacity="0.7" stroke-dasharray="1.6 1.6"/>
<path d="M789.3 226.8 L809.3 233.5 L819.3 248.5 L812.7 261.9 L826.0 270.2" fill="none" stroke="#5f6368" stroke-width="0.7" stroke-opacity="0.7" stroke-dasharray="1.6 1.6"/>
<path d="M826.0 233.5 L851.1 235.2 L876.1 248.5" fill="none" stroke="#5f6368" stroke-width="0.7" stroke-opacity="0.7" stroke-dasharray="1.6 1.6"/>
<path d="M792.6 255.2 L806.0 255.2 L819.3 270.2 L826.0 281.9" fill="none" stroke="#5f6368" stroke-width="0.7" stroke-opacity="0.7" stroke-dasharray="1.6 1.6"/>
<text x="574.0" y="9.0" font-family="Liberation Sans, sans-serif" font-size="10.5" font-weight="normal" fill="#1967d2" text-anchor="middle"  >Baltic Sea</text>
<text x="388.0" y="51.0" font-family="Liberation Sans, sans-serif" font-size="10.5" font-weight="normal" fill="#1967d2" text-anchor="middle"  >North Sea</text>
<text x="738.0" y="285.0" font-family="Liberation Sans, sans-serif" font-size="10.5" font-weight="normal" fill="#1967d2" text-anchor="middle"  >Black Sea</text>
<text x="644.0" y="41.5" font-family="Liberation Sans, sans-serif" font-size="13" font-weight="bold" fill="#202124" text-anchor="middle" paint-order="stroke" stroke="#fff" stroke-width="2.6" stroke-linejoin="round" >Latvia</text>
<text x="620.0" y="71.0" font-family="Liberation Sans, sans-serif" font-size="13" font-weight="bold" fill="#202124" text-anchor="middle" paint-order="stroke" stroke="#fff" stroke-width="2.6" stroke-linejoin="round" >Lithuania</text>
<text x="463.0" y="72.0" font-family="Liberation Sans, sans-serif" font-size="13" font-weight="bold" fill="#202124" text-anchor="middle" paint-order="stroke" stroke="#fff" stroke-width="2.6" stroke-linejoin="round" >Denmark</text>
<text x="317.0" y="75.5" font-family="Liberation Sans, sans-serif" font-size="13" font-weight="bold" fill="#202124" text-anchor="middle" paint-order="stroke" stroke="#fff" stroke-width="2.6" stroke-linejoin="round" >United</text>
<text x="317.0" y="90.0" font-family="Liberation Sans, sans-serif" font-size="13" font-weight="bold" fill="#202124" text-anchor="middle" paint-order="stroke" stroke="#fff" stroke-width="2.6" stroke-linejoin="round" >Kingdom</text>
<text x="251.5" y="122.0" font-family="Liberation Sans, sans-serif" font-size="13" font-weight="bold" fill="#202124" text-anchor="middle" paint-order="stroke" stroke="#fff" stroke-width="2.6" stroke-linejoin="round" >Ireland</text>
<text x="418.5" y="128.5" font-family="Liberation Sans, sans-serif" font-size="13" font-weight="bold" fill="#202124" text-anchor="middle" paint-order="stroke" stroke="#fff" stroke-width="2.6" stroke-linejoin="round" >Netherlands</text>
<text x="561.0" y="122.5" font-family="Liberation Sans, sans-serif" font-size="13" font-weight="bold" fill="#202124" text-anchor="middle" paint-order="stroke" stroke="#fff" stroke-width="2.6" stroke-linejoin="round" >Poland</text>
<text x="667.0" y="116.5" font-family="Liberation Sans, sans-serif" font-size="13" font-weight="bold" fill="#202124" text-anchor="middle" paint-order="stroke" stroke="#fff" stroke-width="2.6" stroke-linejoin="round" >Belarus</text>
<text x="466.0" y="155.0" font-family="Liberation Sans, sans-serif" font-size="13" font-weight="bold" fill="#202124" text-anchor="middle" paint-order="stroke" stroke="#fff" stroke-width="2.6" stroke-linejoin="round" >Germany</text>
<text x="401.0" y="167.0" font-family="Liberation Sans, sans-serif" font-size="13" font-weight="bold" fill="#202124" text-anchor="middle" paint-order="stroke" stroke="#fff" stroke-width="2.6" stroke-linejoin="round" >Belgium</text>
<text x="522.0" y="185.0" font-family="Liberation Sans, sans-serif" font-size="13" font-weight="bold" fill="#202124" text-anchor="middle" paint-order="stroke" stroke="#fff" stroke-width="2.6" stroke-linejoin="round" >Czechia</text>
<text x="581.0" y="198.5" font-family="Liberation Sans, sans-serif" font-size="13" font-weight="bold" fill="#202124" text-anchor="middle" paint-order="stroke" stroke="#fff" stroke-width="2.6" stroke-linejoin="round" >Slovakia</text>
<text x="705.0" y="192.5" font-family="Liberation Sans, sans-serif" font-size="13" font-weight="bold" fill="#202124" text-anchor="middle" paint-order="stroke" stroke="#fff" stroke-width="2.6" stroke-linejoin="round" >Ukraine</text>
<text x="509.0" y="217.5" font-family="Liberation Sans, sans-serif" font-size="13" font-weight="bold" fill="#202124" text-anchor="middle" paint-order="stroke" stroke="#fff" stroke-width="2.6" stroke-linejoin="round" >Austria</text>
<text x="573.0" y="228.0" font-family="Liberation Sans, sans-serif" font-size="13" font-weight="bold" fill="#202124" text-anchor="middle" paint-order="stroke" stroke="#fff" stroke-width="2.6" stroke-linejoin="round" >Hungary</text>
<text x="672.0" y="217.5" font-family="Liberation Sans, sans-serif" font-size="13" font-weight="bold" fill="#202124" text-anchor="middle" paint-order="stroke" stroke="#fff" stroke-width="2.6" stroke-linejoin="round" >Moldova</text>
<text x="376.5" y="234.0" font-family="Liberation Sans, sans-serif" font-size="13" font-weight="bold" fill="#202124" text-anchor="middle" paint-order="stroke" stroke="#fff" stroke-width="2.6" stroke-linejoin="round" >France</text>
<text x="632.0" y="246.5" font-family="Liberation Sans, sans-serif" font-size="13" font-weight="bold" fill="#202124" text-anchor="middle" paint-order="stroke" stroke="#fff" stroke-width="2.6" stroke-linejoin="round" >Romania</text>
<text x="517.0" y="259.0" font-family="Liberation Sans, sans-serif" font-size="13" font-weight="bold" fill="#202124" text-anchor="middle" paint-order="stroke" stroke="#fff" stroke-width="2.6" stroke-linejoin="round" >Croatia</text>
<text x="584.5" y="275.0" font-family="Liberation Sans, sans-serif" font-size="13" font-weight="bold" fill="#202124" text-anchor="middle" paint-order="stroke" stroke="#fff" stroke-width="2.6" stroke-linejoin="round" >Serbia</text>
<text x="489.0" y="292.0" font-family="Liberation Sans, sans-serif" font-size="13" font-weight="bold" fill="#202124" text-anchor="middle" paint-order="stroke" stroke="#fff" stroke-width="2.6" stroke-linejoin="round" >Italy</text>
<text x="480.0" y="129.0" font-family="Liberation Sans, sans-serif" font-size="12" font-weight="normal" fill="#202124" text-anchor="middle" paint-order="stroke" stroke="#fff" stroke-width="2.6" stroke-linejoin="round" >Berlin</text>
<text x="587.0" y="145.0" font-family="Liberation Sans, sans-serif" font-size="12" font-weight="normal" fill="#202124" text-anchor="middle" paint-order="stroke" stroke="#fff" stroke-width="2.6" stroke-linejoin="round" >Warsaw</text>
<text x="345.5" y="138.0" font-family="Liberation Sans, sans-serif" font-size="12" font-weight="normal" fill="#202124" text-anchor="middle" paint-order="stroke" stroke="#fff" stroke-width="2.6" stroke-linejoin="round" >London</text>
<text x="695.0" y="145.0" font-family="Liberation Sans, sans-serif" font-size="12" font-weight="normal" fill="#202124" text-anchor="middle" paint-order="stroke" stroke="#fff" stroke-width="2.6" stroke-linejoin="round" >Kyiv</text>
<text x="695.0" y="157.0" font-family="Liberation Sans, sans-serif" font-size="12" font-weight="normal" fill="#202124" text-anchor="middle" paint-order="stroke" stroke="#fff" stroke-width="2.6" stroke-linejoin="round" >Київ</text>
<text x="375.0" y="184.5" font-family="Liberation Sans, sans-serif" font-size="12" font-weight="normal" fill="#202124" text-anchor="middle" paint-order="stroke" stroke="#fff" stroke-width="2.6" stroke-linejoin="round" >Paris</text>
<text x="408.5" y="276.0" font-family="Liberation Sans, sans-serif" font-size="12" font-weight="normal" fill="#202124" text-anchor="middle" paint-order="stroke" stroke="#fff" stroke-width="2.6" stroke-linejoin="round" >Marseille</text>
<text x="775.5" y="44.0" font-family="Liberation Sans, sans-serif" font-size="12" font-weight="normal" fill="#202124" text-anchor="middle" paint-order="stroke" stroke="#fff" stroke-width="2.6" stroke-linejoin="round" >Moscow</text>
<text x="775.5" y="56.5" font-family="Liberation Sans, sans-serif" font-size="12" font-weight="normal" fill="#202124" text-anchor="middle" paint-order="stroke" stroke="#fff" stroke-width="2.6" stroke-linejoin="round" >Москва</text>
<text x="907.0" y="44.0" font-family="Liberation Sans, sans-serif" font-size="12" font-weight="normal" fill="#202124" text-anchor="middle" paint-order="stroke" stroke="#fff" stroke-width="2.6" stroke-linejoin="round" >Kazan</text>
<text x="907.0" y="56.5" font-family="Liberation Sans, sans-serif" font-size="12" font-weight="normal" fill="#202124" text-anchor="middle" paint-order="stroke" stroke="#fff" stroke-width="2.6" stroke-linejoin="round" >Казань</text>
<circle cx="500.5" cy="125.5" r="4.4" fill="#fff"/><circle cx="500.5" cy="125.5" r="3.050" fill="#fff" stroke="#111" stroke-width="1.250"/>
<circle cx="500.5" cy="125.5" r="1.450" fill="#111"/>
<circle cx="587.0" cy="130.5" r="4.4" fill="#fff"/><circle cx="587.0" cy="130.5" r="3.050" fill="#fff" stroke="#111" stroke-width="1.250"/>
<circle cx="587.0" cy="130.5" r="1.450" fill="#111"/>
<circle cx="346.5" cy="144.5" r="4.4" fill="#fff"/><circle cx="346.5" cy="144.5" r="3.050" fill="#fff" stroke="#111" stroke-width="1.250"/>
<circle cx="346.5" cy="144.5" r="1.450" fill="#111"/>
<circle cx="695.0" cy="163.5" r="4.4" fill="#fff"/><circle cx="695.0" cy="163.5" r="3.050" fill="#fff" stroke="#111" stroke-width="1.250"/>
<circle cx="695.0" cy="163.5" r="1.450" fill="#111"/>
<circle cx="374.6" cy="191.6" r="4.4" fill="#fff"/><circle cx="374.6" cy="191.6" r="3.050" fill="#fff" stroke="#111" stroke-width="1.250"/>
<circle cx="374.6" cy="191.6" r="1.450" fill="#111"/>
<circle cx="409.0" cy="282.0" r="4.4" fill="#fff"/><circle cx="409.0" cy="282.0" r="3.050" fill="#fff" stroke="#111" stroke-width="1.250"/>
<circle cx="776.0" cy="62.5" r="4.4" fill="#fff"/><circle cx="776.0" cy="62.5" r="3.050" fill="#fff" stroke="#111" stroke-width="1.250"/>
<circle cx="776.0" cy="62.5" r="1.450" fill="#111"/>
<circle cx="907.0" cy="62.0" r="4.4" fill="#fff"/><circle cx="907.0" cy="62.0" r="3.050" fill="#fff" stroke="#111" stroke-width="1.250"/>
<rect x="813" y="285" width="124" height="16" fill="#fff" fill-opacity="0.7"/>
<text x="815.5" y="295.5" font-family="Liberation Sans, sans-serif" font-size="10" font-weight="normal" fill="#3c4043" text-anchor="start"  textLength="116.500" lengthAdjust="spacingAndGlyphs">Map data ©2024 Google</text>
<text x="6.399999999999977" y="293" font-family="Liberation Sans, sans-serif" font-size="19" fill="#fff" stroke="#3d4b63" stroke-width="4.600" stroke-linejoin="round" textLength="54.500" lengthAdjust="spacingAndGlyphs">Google</text><text x="6.399999999999977" y="293" font-family="Liberation Sans, sans-serif" font-size="19" fill="#fff" textLength="54.500" lengthAdjust="spacingAndGlyphs">Google</text></svg>
</div>
<div class="abs" style="left:937px;top:835px;width:935px;height:77px;background:#f5f5f5;border:1px solid #bdbdbd;border-top-color:#c8c8c8"></div>
<div class="inp" style="left:1109px;top:851px;width:82px;height:34px;border-color:#aaa"></div>
<div class="abs" style="left:1638px;top:859px;width:135px;height:37px;border-radius:19px;background:#fff"></div>

<!-- calc box -->
<div class="abs" style="left:809px;top:927px;width:1063px;height:150px;background:#e6f5fb;border-radius:5px"></div>
<div class="abs" style="left:1494px;top:947px;width:313px;height:86px;border-radius:5px;background:#808588"></div>

<div class="t" style="left:963.80px;top:23.98px;font-size:14.2px;color:#0d3d4d;letter-spacing:-0.400px;">DEMO</div>
<div class="t" style="left:1074.60px;top:23.98px;font-size:14.2px;color:#0d3d4d;letter-spacing:0.379px;">adm:MXP4</div>
<div class="t" style="left:1235.80px;top:22.64px;font-size:13.3px;color:#0d3d4d;letter-spacing:0.133px;">1531</div>
<div class="t" style="left:1315.40px;top:22.64px;font-size:13.3px;color:#0d3d4d;letter-spacing:-0.500px;">EUR</div>
<div class="t" style="left:1402.40px;top:22.12px;font-size:14.8px;color:#0d3d4d;letter-spacing:-0.175px;">English</div>
<div class="t" style="left:1565.80px;top:21.63px;font-size:14.5px;color:#1d2b33;letter-spacing:-0.282px;">Buzz Aldrin (1531)</div>
<div class="t" style="left:1805.20px;top:22.47px;font-size:13.5px;color:#0d3d4d;letter-spacing:0.100px;">User</div>
<div class="t" style="left:11.00px;top:81.05px;font-size:14px;color:#fff;letter-spacing:0.375px;-webkit-text-stroke:0.3px #fff">Travel requests</div>
<div class="t" style="left:159.00px;top:81.05px;font-size:14px;color:#0d3d4d;letter-spacing:0.271px;-webkit-text-stroke:0.2px #0d3d4d">Expenses</div>
<div class="t" style="left:269.10px;top:81.05px;font-size:14px;color:#fff;letter-spacing:0.450px;-webkit-text-stroke:0.3px #fff">Approval</div>
<div class="t" style="left:368.90px;top:81.05px;font-size:14px;color:#fff;letter-spacing:0.589px;-webkit-text-stroke:0.3px #fff">Statistics</div>
<div class="t" style="left:467.80px;top:81.05px;font-size:14px;color:#fff;letter-spacing:0.611px;-webkit-text-stroke:0.3px #fff">My profile</div>
<div class="t" style="left:42.70px;top:132.79px;font-size:14.42px;color:#0f4a5c;letter-spacing:0.056px;">Dashboard</div>
<div class="t" style="left:42.70px;top:182.79px;font-size:14.42px;color:#0f4a5c;letter-spacing:0.111px;">My transactions</div>
<div class="t" style="left:42.70px;top:224.71px;font-size:12.98px;color:#0f4a5c;letter-spacing:0.123px;">New expenses</div>
<div class="t" style="left:42.70px;top:258.81px;font-size:12.98px;color:#555;letter-spacing:0.195px;">New mileage</div>
<div class="t" style="left:42.70px;top:292.71px;font-size:12.98px;color:#0f4a5c;letter-spacing:0.192px;">New allowances</div>
<div class="t" style="left:42.60px;top:335.74px;font-size:14.42px;color:#0f4a5c;letter-spacing:-0.100px;">Reports</div>
<div class="t" style="left:42.60px;top:385.79px;font-size:14.42px;color:#0f4a5c;letter-spacing:-0.103px;">Personal expenses</div>
<div class="t" style="left:71.10px;top:447.32px;font-size:14.63px;color:#fff;letter-spacing:-0.450px;">Search</div>
<div class="t" style="left:17.00px;top:1024.98px;font-size:9.48px;color:#444;letter-spacing:0.522px;font-weight:bold;">We are on mobile!</div>
<div class="t" style="left:17.00px;top:1041.14px;font-size:12.36px;color:#004455;letter-spacing:0.523px;font-weight:bold;text-decoration:underline;text-underline-offset:1.5px">Discover SpendCatcher</div>
<div class="t" style="left:248.70px;top:116.19px;font-size:25.23px;color:#0b3c4c;letter-spacing:0.115px;">New mileage</div>
<div class="t" style="left:277.70px;top:238.03px;font-size:13.91px;color:#3f4448;letter-spacing:0.067px;">Date</div>
<div class="t" style="left:283.70px;top:268.26px;font-size:16px;color:#333;letter-spacing:0.094px;">dd/mm/yyyy</div>
<div class="t" style="left:579.70px;top:238.13px;font-size:13.91px;color:#3f4448;letter-spacing:0.305px;">Mileage rate</div>
<div class="t" style="left:585.80px;top:269.02px;font-size:13.8px;color:#444;letter-spacing:0.265px;">Privatwagen</div>
<div class="t" style="left:277.70px;top:301.13px;font-size:13.91px;color:#3a3f4a;letter-spacing:0.550px;">Comment</div>
<div class="t" style="left:273.00px;top:500.21px;font-size:18.54px;color:#3d3d3d;letter-spacing:0.581px;font-weight:bold;">Itinerary</div>
<div class="t" style="left:392.40px;top:545.42px;font-size:14.63px;color:#fff;letter-spacing:0.083px;">New Itinerary</div>
<div class="t" style="left:714.70px;top:545.42px;font-size:14.63px;color:#444;letter-spacing:-0.086px;">Saved Itinerary</div>
<div class="t" style="left:272.70px;top:598.16px;font-size:14.11px;color:#444;letter-spacing:0.000px;">A</div>
<div class="t" style="left:273.50px;top:646.76px;font-size:14.11px;color:#444;letter-spacing:0.000px;">B</div>
<div class="t" style="left:321.50px;top:692.20px;font-size:16.07px;color:#004455;letter-spacing:-0.132px;">Add a new point</div>
<div class="t" style="left:770.30px;top:735.51px;font-size:14.52px;color:#fff;letter-spacing:-0.085px;">Save Itinerary</div>
<div class="t" style="left:953.60px;top:859.13px;font-size:13.91px;color:#4a4a55;letter-spacing:0.045px;">Business Km</div>
<div class="t" style="left:1178.00px;top:861.07px;font-size:13.39px;color:#666;letter-spacing:0.000px;">0</div>
<div class="t" style="left:1199.90px;top:859.13px;font-size:13.91px;color:#4a4a55;letter-spacing:-0.450px;">Km</div>
<div class="t" style="left:1691.90px;top:843.54px;font-size:12.36px;color:#4a4a55;letter-spacing:0.275px;">Total</div>
<div class="t" style="left:1686.50px;top:865.45px;font-size:25.34px;color:#111;letter-spacing:0.000px;">0</div>
<div class="t" style="left:1704.80px;top:875.30px;font-size:13.7px;color:#222;letter-spacing:-0.150px;">Km</div>
<div class="t" style="left:825.20px;top:947.18px;font-size:13.49px;color:#3a3a45;letter-spacing:0.462px;font-style:italic;">Changes have been made to your mileage. Click on the ‘Calculate’-button on</div>
<div class="t" style="left:825.20px;top:965.18px;font-size:13.49px;color:#3a3a45;letter-spacing:0.531px;font-style:italic;">the right to recalculate your mileage.</div>
<div class="t" style="left:1625.80px;top:971.79px;font-size:20.09px;color:#fff;letter-spacing:0.031px;">Calculate</div>
<div class="t" style="left:1614.30px;top:996.99px;font-size:20.09px;color:#fff;letter-spacing:0.292px;">mileage</div>
<svg style="left:938px;top:20px" width="20" height="20" viewBox="938 20 20 20" fill="none" stroke="#0d3d4d" stroke-width="1.15"><ellipse cx="947.55" cy="24.5" rx="7.1" ry="2.700"/><path d="M940.450 24.500V35.200c0 1.500 3.200 2.700 7.100 2.700s7.100-1.200 7.100-2.700V24.500"/><path d="M940.450 28.100c0 1.500 3.200 2.700 7.100 2.700s7.100-1.200 7.100-2.700"/><path d="M940.450 31.700c0 1.500 3.200 2.700 7.100 2.700s7.100-1.200 7.100-2.700"/></svg>
<svg style="left:1044.3px;top:20.2px" width="18" height="19" viewBox="0 0 24 24" preserveAspectRatio="none" fill="none" stroke="#0d3d4d" stroke-width="1.650" stroke-linecap="round" stroke-linejoin="round"><polyline points="23 4 23 10 17 10"/><polyline points="1 20 1 14 7 14"/><path d="M3.510 9a9 9 0 0 1 14.850-3.360L23 10M1 14l4.640 4.360A9 9 0 0 0 20.490 15"/></svg>
<svg style="left:1152.7px;top:27.3px" width="10.4" height="7" viewBox="-1 -1 10.4 7" fill="none" stroke="#0d3d4d" stroke-width="1.5" stroke-linecap="round" stroke-linejoin="round"><path d="M0 0 L4.2 4.4 L8.4 0"/></svg>
<svg style="left:1211px;top:18px" width="19" height="21" viewBox="1211 18 19 21" fill="none" stroke="#0d3d4d" stroke-width="1.150"><path d="M1214.500 37V21.300a.700.700 0 0 1 .7-.7H1225.600a.700.700 0 0 1 .7.700V37"/><path d="M1212.400 36.900H1228.200" stroke-width="1.300"/><path d="M1220.400 36.600V34.200" stroke-width="2" stroke-linecap="round"/><g fill="#0d3d4d" stroke="none"><circle cx="1218.200" cy="24.600" r="1.050"/><circle cx="1222.600" cy="24.600" r="1.050"/><circle cx="1218.200" cy="27.900" r="1.050"/><circle cx="1222.600" cy="27.900" r="1.050"/><circle cx="1218.200" cy="31" r="1.050"/><circle cx="1222.600" cy="31" r="1.050"/></g></svg>
<svg style="left:1290.6px;top:20.6px" width="18.4" height="15.6" viewBox="0 0 18 15.300" fill="#0d3d4d" ><g fill="none" stroke="#0d3d4d" stroke-width="1.05" stroke-linecap="round">
<ellipse cx="12" cy="2.9" rx="5.4" ry="2.3" fill="#fff"/>
<path d="M6.6 2.9v6.4c0 1.3 2.4 2.3 5.4 2.3s5.400-1 5.400-2.300V2.900"/>
<path d="M17.400 6.100c0 1.300-2.400 2.300-5.400 2.300"/>
<path d="M17.400 9.300c0 .2-.1.400-.2.600"/>
<path d="M.600 5.900v6.400c0 1.300 2.600 2.400 5.700 2.400s5.700-1.100 5.700-2.400V5.900" fill="#fff"/>
<ellipse cx="6.300" cy="5.900" rx="5.700" ry="2.400" fill="#fff"/>
<path d="M.600 9.100c0 1.300 2.600 2.400 5.700 2.400s5.700-1.100 5.700-2.400"/>
</g></svg>
<svg style="left:1364px;top:18px" width="22" height="22" viewBox="1364 18 22 22" fill="none" stroke="#0d3d4d" stroke-width="1.150"><circle cx="1374.850" cy="28.850" r="8.200"/><ellipse cx="1374.850" cy="28.850" rx="3.700" ry="8.200"/><path d="M1374.850 20.650V37.050M1367.300 25.900H1382.400M1367.300 31.800H1382.400"/></svg>
<svg style="left:1470px;top:25.6px" width="10.4" height="7" viewBox="-1 -1 10.4 7" fill="none" stroke="#0d3d4d" stroke-width="1.5" stroke-linecap="round" stroke-linejoin="round"><path d="M0 0 L4.2 4.4 L8.4 0"/></svg>
<svg style="left:1514.2px;top:20.6px" width="17.6" height="17.6" viewBox="0 0 17 17" fill="#0d3d4d" ><g fill="none" stroke="#0d3d4d" stroke-width="1.15"><circle cx="8.500" cy="8.500" r="7.900"/><circle cx="8.500" cy="6.800" r="2.700"/><path d="M3.300 14.300c.9-2.300 2.900-3.300 5.200-3.300s4.300 1 5.200 3.300"/></g></svg>
<svg style="left:1541px;top:25.6px" width="10.4" height="7" viewBox="-1 -1 10.4 7" fill="none" stroke="#0d3d4d" stroke-width="1.5" stroke-linecap="round" stroke-linejoin="round"><path d="M0 0 L4.2 4.4 L8.4 0"/></svg>
<svg style="left:1717.8px;top:20.7px" width="17.5" height="17.5" viewBox="0 0 16 16" fill="#0d3d4d" ><path d="M11.742 10.344a6.5 6.5 0 1 0-1.397 1.398h-.001q.044.06.098.115l3.85 3.85a1 1 0 0 0 1.415-1.414l-3.850-3.850a1 1 0 0 0-.115-.1zM12 6.500a5.500 5.500 0 1 1-11 0 5.500 5.500 0 0 1 11 0"/></svg>
<svg style="left:1877.8px;top:25.6px" width="10.4" height="7" viewBox="-1 -1 10.4 7" fill="none" stroke="#0d3d4d" stroke-width="1.5" stroke-linecap="round" stroke-linejoin="round"><path d="M0 0 L4.2 4.4 L8.4 0"/></svg>
<svg style="left:1883.6px;top:79.6px" width="16.8" height="16.8" viewBox="0 0 16 16" fill="#fff" ><path d="M8 15A7 7 0 1 1 8 1a7 7 0 0 1 0 14m0 1A8 8 0 1 0 8 0a8 8 0 0 0 0 16"/><path d="M5.255 5.786a.237.237 0 0 0 .241.247h.825c.138 0 .248-.113.266-.25.09-.656.54-1.134 1.342-1.134.686 0 1.314.343 1.314 1.168 0 .635-.374.927-.965 1.371-.673.489-1.206 1.060-1.168 1.987l.003.217a.25.25 0 0 0 .25.246h.811a.25.25 0 0 0 .25-.25v-.105c0-.718.273-.927 1.010-1.486.609-.463 1.244-.977 1.244-2.056 0-1.511-1.276-2.241-2.673-2.241-1.267 0-2.655.59-2.750 2.286m1.557 5.763c0 .533.425.927 1.010.927.609 0 1.028-.394 1.028-.927 0-.552-.42-.940-1.029-.940-.584 0-1.009.388-1.009.940"/></svg>
<svg style="left:20px;top:133px" width="14" height="14" viewBox="3 3 18 18" fill="#0f4a5c" ><path d="M13 3v6h8V3m-8 18h8V11h-8M3 21h8v-6H3m0-2h8V3H3z"/></svg>
<svg style="left:18px;top:182px" width="18" height="16" viewBox="18 182 18 16" fill="none" stroke="#0f4a5c" stroke-width="1.1"><path d="M21.7 194.300H19.500V183.700H32.200V185.500"/><rect x="21.700" y="185.500" width="12.700" height="10.800"/></svg>
<svg style="left:22px;top:224.1px" width="10.3" height="13.9" viewBox="4 2 16 20" fill="#0f4a5c" preserveAspectRatio="none"><path d="M13 9h5.5L13 3.5zM6 2h8l6 6v12a2 2 0 0 1-2 2H6a2 2 0 0 1-2-2V4c0-1.110.890-2 2-2m9 16v-2H6v2zm3-4v-2H6v2z"/></svg>
<svg style="left:20px;top:259.9px" width="14.1" height="11.3" viewBox="3 5 18 16" fill="#0f4a5c" preserveAspectRatio="none"><path d="m5 11 1.500-4.500h11L19 11m-1.500 5a1.500 1.500 0 0 1-1.500-1.500 1.500 1.500 0 0 1 1.500-1.500 1.500 1.500 0 0 1 1.500 1.500 1.500 1.500 0 0 1-1.500 1.500m-11 0A1.500 1.500 0 0 1 5 14.500 1.500 1.500 0 0 1 6.500 13 1.500 1.500 0 0 1 8 14.500 1.500 1.500 0 0 1 6.500 16M18.920 6c-.200-.580-.760-1-1.420-1h-11c-.660 0-1.220.420-1.420 1L3 12v8a1 1 0 0 0 1 1h1a1 1 0 0 0 1-1v-1h12v1a1 1 0 0 0 1 1h1a1 1 0 0 0 1-1v-8z"/></svg>
<svg style="left:18px;top:290px" width="18" height="18" viewBox="18 290 18 18" fill="none" stroke="#0f4a5c"><rect x="20.100" y="293.600" width="13.900" height="12.500" stroke-width="2"/><path d="M19.100 293.200H35" stroke-width="2.400"/><rect x="22.300" y="291.400" width="2.600" height="2.400" stroke-width="0.900" fill="#f9f9f9"/><rect x="29.200" y="291.400" width="2.600" height="2.400" stroke-width="0.900" fill="#f9f9f9"/></svg>
<svg style="left:18px;top:335px" width="18" height="16" viewBox="18 335 18 16" fill="none" stroke="#0f4a5c" stroke-width="1.050" stroke-linejoin="round"><path d="M19.500 336.600H24.300L25.100 337.500H34.400V349.400H19.500Z"/><path d="M19.500 340.300H34.400"/></svg>
<svg style="left:19px;top:384px" width="17" height="17" viewBox="19 384 17 17" fill="none" stroke="#0f4a5c" stroke-width="0.950" stroke-linejoin="round"><path d="M20.600 392.200L27.200 386.200L33.800 392.200"/><path d="M20.600 393.400L27.200 387.500L33.800 393.400"/><path d="M21.700 392.600V399.300H25.100V395.300H29.300V399.300H32.700V392.600"/><path d="M22.100 390.700V387.300H23.700V389.300"/></svg>
<svg style="left:121px;top:444.4px" width="24.5" height="24.5" viewBox="0 0 24 24" fill="#fff" ><path d="M9.500 3A6.500 6.500 0 0 1 16 9.500c0 1.610-.590 3.090-1.560 4.230l.270.270h.790l5 5-1.500 1.500-5-5v-.790l-.270-.270A6.520 6.520 0 0 1 9.500 16 6.500 6.500 0 0 1 3 9.500 6.500 6.500 0 0 1 9.500 3m0 2C7 5 5 7 5 9.500S7 14 9.500 14 14 12 14 9.500 12 5 9.500 5"/></svg>
<svg style="left:18px;top:982px" width="38" height="40" viewBox="18 982 38 40"><rect x="20.100" y="984.200" width="25.400" height="33.500" rx="3.200" fill="#004455"/><rect x="22.300" y="986.400" width="21" height="25.800" rx="0.800" fill="#e6f5fb"/><rect x="29.200" y="1014.300" width="5.400" height="1.500" rx="0.500" fill="#8fb0bb"/><rect x="36.900" y="992.800" width="16.700" height="26.600" rx="3" fill="#e0671c"/><rect x="39.100" y="995.300" width="12.300" height="19.700" rx="0.800" fill="#fcefe6"/><circle cx="45.300" cy="1017.200" r="0.950" fill="#7a3208"/></svg>
<svg style="left:403.4px;top:126.8px" width="12" height="12" viewBox="0 0 16 16" fill="#0b3c4c" ><path d="M8 15A7 7 0 1 1 8 1a7 7 0 0 1 0 14m0 1A8 8 0 1 0 8 0a8 8 0 0 0 0 16"/><path d="M5.255 5.786a.237.237 0 0 0 .241.247h.825c.138 0 .248-.113.266-.25.09-.656.54-1.134 1.342-1.134.686 0 1.314.343 1.314 1.168 0 .635-.374.927-.965 1.371-.673.489-1.206 1.060-1.168 1.987l.003.217a.25.25 0 0 0 .25.246h.811a.25.25 0 0 0 .25-.25v-.105c0-.718.273-.927 1.010-1.486.609-.463 1.244-.977 1.244-2.056 0-1.511-1.276-2.241-2.673-2.241-1.267 0-2.655.59-2.750 2.286m1.557 5.763c0 .533.425.927 1.010.927.609 0 1.028-.394 1.028-.927 0-.552-.42-.940-1.029-.940-.584 0-1.009.388-1.009.940"/></svg>
<svg style="left:1810.5px;top:178.5px" width="17" height="16" viewBox="0 0 16 16" fill="#fff" ><path d="M12.736 3.970a.733.733 0 0 1 1.047 0c.286.289.290.756.010 1.050L7.880 12.010a.733.733 0 0 1-1.065.020L3.217 8.384a.757.757 0 0 1 0-1.060.733.733 0 0 1 1.047 0l3.052 3.093 5.400-6.425z"/></svg>
<svg style="left:1846px;top:177px" width="19" height="19" viewBox="1846 177 19 19" fill="none" stroke="#2b3035" stroke-width="2.300" stroke-linecap="round"><path d="M1849.500 180.300L1861.500 192M1861.500 180.300L1849.500 192"/></svg>
<svg style="left:525px;top:270px" width="15" height="15" viewBox="525 270 15 15" fill="none" stroke="#3a3a3a"><rect x="526.800" y="273.500" width="10.700" height="9" stroke-width="1.150"/><path d="M526.200 273.600H538.100" stroke-width="2.100"/><path d="M529 271.300v1.600M535.300 271.300v1.600" stroke-width="1.300"/></svg>
<svg style="left:295px;top:689px" width="19" height="19" viewBox="295 689 19 19" fill="none" stroke="#004455" stroke-width="2.900" stroke-linecap="round"><path d="M304.700 692.500V704.500M298.700 698.500H310.700"/></svg>
<svg style="left:750px;top:734px" width="19" height="15" viewBox="750 734 19 15" fill="none" stroke="#fff" stroke-width="1.900" stroke-linecap="round" stroke-linejoin="round"><path d="M753.300 742.400L756.800 745.700L765.400 737.600"/></svg>
<svg style="left:1593.2px;top:969px" width="19.5" height="21" viewBox="1 0 14 16" fill="#fff" preserveAspectRatio="none"><path d="M2 2a2 2 0 0 1 2-2h8a2 2 0 0 1 2 2v12a2 2 0 0 1-2 2H4a2 2 0 0 1-2-2zm2 .5v2a.5.5 0 0 0 .5.5h7a.5.5 0 0 0 .5-.5v-2a.5.5 0 0 0-.5-.5h-7a.5.5 0 0 0-.5.5m0 4v1a.5.5 0 0 0 .5.5h1a.5.5 0 0 0 .5-.5v-1a.5.5 0 0 0-.5-.5h-1a.5.5 0 0 0-.5.5M4.5 9a.5.5 0 0 0-.5.5v1a.5.5 0 0 0 .5.5h1a.5.5 0 0 0 .5-.5v-1a.5.5 0 0 0-.5-.5zM4 12.500v1a.5.5 0 0 0 .5.5h1a.5.5 0 0 0 .5-.5v-1a.5.5 0 0 0-.5-.5h-1a.5.5 0 0 0-.5.5M7.500 6a.5.5 0 0 0-.5.5v1a.5.5 0 0 0 .5.5h1a.5.5 0 0 0 .5-.5v-1a.5.5 0 0 0-.5-.5zM7 9.500v1a.5.5 0 0 0 .5.5h1a.5.5 0 0 0 .5-.5v-1a.5.5 0 0 0-.5-.5h-1a.5.5 0 0 0-.5.5m.5 2.500a.5.5 0 0 0-.5.5v1a.5.5 0 0 0 .5.5h1a.5.5 0 0 0 .5-.5v-1a.5.5 0 0 0-.5-.5zM10 6.500v1a.5.5 0 0 0 .5.5h1a.5.5 0 0 0 .5-.5v-1a.5.5 0 0 0-.5-.5h-1a.5.5 0 0 0-.5.5m.5 2.500a.5.5 0 0 0-.5.5v4a.5.5 0 0 0 .5.5h1a.5.5 0 0 0 .5-.5v-4a.5.5 0 0 0-.5-.5z"/></svg>
<!-- highlights -->
<div class="hl" style="left:266px;top:226px;width:287px;height:77px"></div>
<div class="hl" style="left:570px;top:226px;width:893px;height:75px"></div>
<div class="hl" style="left:266px;top:578px;width:644px;height:119px"></div>

<!-- scrollbar + top button -->
<div class="abs" style="left:1912px;top:146px;width:2px;height:771px;background:#8a8a8a"></div>
<div class="abs" style="left:1887px;top:1045px;width:25px;height:25px;background:#004455;border-radius:3px"></div>
<svg style="left:1892px;top:1052px" width="15" height="11" viewBox="0 0 15 11" fill="none" stroke="#fff" stroke-width="2.200"><path d="M1.500 9L7.500 3L13.500 9"/></svg>
</body>
</html>
